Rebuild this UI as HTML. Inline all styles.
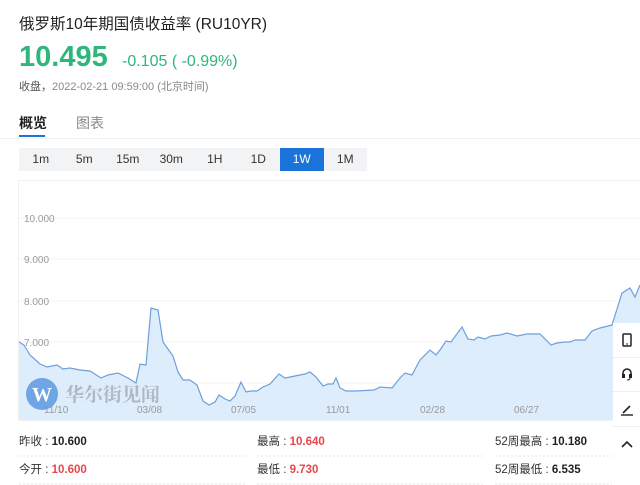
<!DOCTYPE html>
<html><head><meta charset="utf-8"><style>
*{margin:0;padding:0;box-sizing:border-box}
body{width:640px;height:485px;overflow:hidden;background:#fff;font-family:"Liberation Sans","Noto Sans CJK SC",sans-serif;position:relative;color:#333}
.a{position:absolute;white-space:nowrap}
.tabs{position:absolute;left:19px;top:148px;width:348px;height:23px;background:#f2f3f5;display:flex}
.tabs div{width:43.5px;text-align:center;font-size:12px;line-height:23px;color:#333}
.tabs .on{background:#1a73d9;color:#fff}
.lab{font-size:11.5px;color:#333}
.lab b{font-weight:bold;color:#222}
.lab b.r{color:#e8454a}
.tb{position:absolute;left:613px;top:323px;width:27px;height:138px;background:#fff}
.tb div{height:34.5px;border-bottom:1px solid #eee;display:flex;align-items:center;justify-content:center}
</style></head><body>
<div class="a" style="left:19px;top:12px;font-size:15.5px;color:#222">俄罗斯10年期国债收益率 (RU10YR)</div>
<div class="a" style="left:19px;top:41px;font-size:29px;font-weight:bold;color:#2fb67b">10.495</div>
<div class="a" style="left:122px;top:53px;font-size:16px;color:#2fb67b">-0.105 ( -0.99%)</div>
<div class="a" style="left:19px;top:78px;font-size:11px;color:#888"><span style="color:#555">收盘，</span>2022-02-21 09:59:00 (北京时间)</div>
<div class="a" style="left:19px;top:113px;font-size:14px;font-weight:bold;color:#222">概览</div>
<div class="a" style="left:76px;top:113px;font-size:14px;color:#888">图表</div>
<div class="a" style="left:19px;top:135px;width:26px;height:2px;background:#1a73d9"></div>
<div class="a" style="left:0;top:138px;width:640px;height:1px;background:#f0f0f0"></div>
<div class="tabs"><div>1m</div><div>5m</div><div>15m</div><div>30m</div><div>1H</div><div>1D</div><div class="on">1W</div><div>1M</div></div>
<svg class="a" style="left:0;top:0" width="640" height="485">
<rect x="18.5" y="180.5" width="640" height="240" fill="none" stroke="#f0f0f0"/>
<g stroke="#f3f3f3"><line x1="19" x2="640" y1="218" y2="218"/><line x1="19" x2="640" y1="259" y2="259"/><line x1="19" x2="640" y1="301" y2="301"/><line x1="19" x2="640" y1="342" y2="342"/><line x1="19" x2="640" y1="383" y2="383"/></g>
<g font-size="10" fill="#999" font-family="Liberation Sans"><text x="24" y="222">10.000</text><text x="24" y="263">9.000</text><text x="24" y="305">8.000</text><text x="24" y="346">7.000</text><text x="24" y="387">6.000</text></g>
<polygon fill="#deedfc" points="19,420 19,342 24,345 30,355 40,364 47,367 57,365 63,369 70,368 80,370 90,371 101,378 108,375 118,373 128,378 136,383 140,364 146,365 151,308 158,310 163,342 173,356 178,372 183,380 190,380 197,385 203,401 209,405 215,402 219,395 225,399 230,401 235,396 241,382 246,392 251,391 257,391 263,387 270,384 279,374 285,378 295,376 300,375 305,374 310,372 316,377 323,386 328,384 333,384 336,378 340,388 346,391 356,391 374,390 380,387 392,388 400,378 405,373 412,375 420,360 430,350 436,355 440,350 446,341 451,342 462,327 468,339 474,340 478,337 485,339 491,336 500,335 507,333 517,336 527,334 540,334 551,345 557,343 565,342 570,342 575,340 585,340 592,331 600,328 612,325 622,293 630,288 635,297 640,285 640,420"/>
<polyline fill="none" stroke="#6e9fd9" stroke-width="1.2" points="19,342 24,345 30,355 40,364 47,367 57,365 63,369 70,368 80,370 90,371 101,378 108,375 118,373 128,378 136,383 140,364 146,365 151,308 158,310 163,342 173,356 178,372 183,380 190,380 197,385 203,401 209,405 215,402 219,395 225,399 230,401 235,396 241,382 246,392 251,391 257,391 263,387 270,384 279,374 285,378 295,376 300,375 305,374 310,372 316,377 323,386 328,384 333,384 336,378 340,388 346,391 356,391 374,390 380,387 392,388 400,378 405,373 412,375 420,360 430,350 436,355 440,350 446,341 451,342 462,327 468,339 474,340 478,337 485,339 491,336 500,335 507,333 517,336 527,334 540,334 551,345 557,343 565,342 570,342 575,340 585,340 592,331 600,328 612,325 622,293 630,288 635,297 640,285"/>
<g font-size="10" fill="#999" font-family="Liberation Sans"><text x="44" y="413">11/10</text><text x="137" y="413">03/08</text><text x="231" y="413">07/05</text><text x="326" y="413">11/01</text><text x="420" y="413">02/28</text><text x="514" y="413">06/27</text></g>
<circle cx="42" cy="394" r="16" fill="#5c97e0" opacity="0.85"/>
<text x="42" y="401" text-anchor="middle" font-size="20" font-weight="bold" fill="#fff" font-family="Liberation Serif">W</text>
<text x="65" y="401" font-size="19" fill="#a4abb3" opacity="0.8" font-family="Noto Serif CJK SC,serif" font-weight="bold">华尔街见闻</text>
<g stroke="#e5e5e5" stroke-dasharray="2,2"><line x1="19" x2="245" y1="456" y2="456"/><line x1="257" x2="485" y1="456" y2="456"/><line x1="495" x2="612" y1="456" y2="456"/><line x1="19" x2="245" y1="484" y2="484"/><line x1="257" x2="485" y1="484" y2="484"/><line x1="495" x2="612" y1="484" y2="484"/></g>
</svg>
<div class="a lab" style="left:19px;top:433px">昨收 : <b>10.600</b></div>
<div class="a lab" style="left:257px;top:433px">最高 : <b class="r">10.640</b></div>
<div class="a lab" style="left:495px;top:433px">52周最高 : <b>10.180</b></div>
<div class="a lab" style="left:19px;top:461px">今开 : <b class="r">10.600</b></div>
<div class="a lab" style="left:257px;top:461px">最低 : <b class="r">9.730</b></div>
<div class="a lab" style="left:495px;top:461px">52周最低 : <b>6.535</b></div>
<div class="tb">
<div><svg width="12" height="14"><rect x="2" y="1" width="8" height="12" rx="1" fill="none" stroke="#222" stroke-width="1.5"/><line x1="5" x2="7" y1="11" y2="11" stroke="#222"/></svg></div>
<div><svg width="12" height="14"><path d="M2 8V6a4 4 0 0 1 8 0v2" fill="none" stroke="#222" stroke-width="1.6"/><rect x="1" y="7" width="3" height="4" fill="#222"/><rect x="8" y="7" width="3" height="4" fill="#222"/><path d="M9 11q0 2-3 2" fill="none" stroke="#222"/></svg></div>
<div><svg width="14" height="14"><path d="M3 11L10 4" stroke="#222" stroke-width="1.6"/><line x1="1" x2="13" y1="13" y2="13" stroke="#222" stroke-width="1.4"/></svg></div>
<div style="border:none"><svg width="14" height="10"><path d="M2 8L7 3L12 8" fill="none" stroke="#222" stroke-width="1.6"/></svg></div>
</div>
</body></html>
